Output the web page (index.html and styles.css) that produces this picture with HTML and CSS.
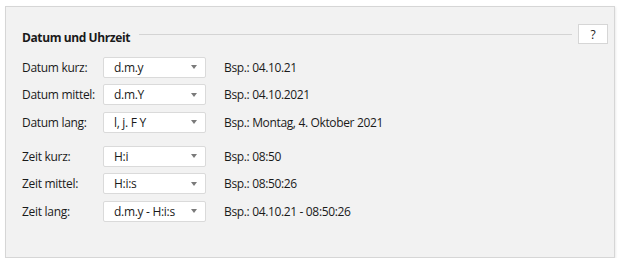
FILE: index.html
```html
<!DOCTYPE html>
<html lang="de">
<head>
<meta charset="utf-8">
<link rel="stylesheet" href="styles.css">
</head>
<body>
<div class="panel">
  <div class="header">
    <span class="title">Datum und Uhrzeit</span>
    <span class="rule"></span>
    <button class="help">?</button>
  </div>
  <div class="group">
    <div class="row"><span class="label">Datum kurz:</span><div class="select"><span>d.m.y</span><i class="arrow"></i></div><span class="example">Bsp.: 04.10.21</span></div>
    <div class="row"><span class="label">Datum mittel:</span><div class="select"><span>d.m.Y</span><i class="arrow"></i></div><span class="example">Bsp.: 04.10.2021</span></div>
    <div class="row"><span class="label">Datum lang:</span><div class="select"><span>l, j. F Y</span><i class="arrow"></i></div><span class="example">Bsp.: Montag, 4. Oktober 2021</span></div>
  </div>
  <div class="group">
    <div class="row"><span class="label">Zeit kurz:</span><div class="select"><span>H:i</span><i class="arrow"></i></div><span class="example">Bsp.: 08:50</span></div>
    <div class="row"><span class="label">Zeit mittel:</span><div class="select"><span>H:i:s</span><i class="arrow"></i></div><span class="example">Bsp.: 08:50:26</span></div>
    <div class="row"><span class="label">Zeit lang:</span><div class="select"><span>d.m.y - H:i:s</span><i class="arrow"></i></div><span class="example">Bsp.: 04.10.21 - 08:50:26</span></div>
  </div>
</div>
</body>
</html>
```
FILE: styles.css
```css
html, body {
  margin: 0;
  padding: 0;
  background: #ffffff;
}
body {
  font-family: "Open Sans", "Noto Sans", sans-serif;
  font-size: 12px;
  color: #1a1a1a;
}
.panel {
  box-sizing: border-box;
  margin: 6px 0 0 5px;
  width: 610px;
  height: 252px;
  background: #f2f2f2;
  border: 1px solid #d6d6d6;
  box-shadow: 1px 1px 2px rgba(0,0,0,0.08);
  padding: 17px 6px 0 16px;
}
.header {
  display: flex;
  align-items: center;
  height: 20px;
}
.title {
  font-weight: 700;
  font-size: 12px;
  letter-spacing: -0.4px;
  position: relative;
  top: 3px;
}
.rule {
  flex: 1;
  height: 1px;
  background: #d4d4d4;
  margin: 0 6px 0 9px;
}
.help {
  box-sizing: border-box;
  width: 30px;
  height: 20px;
  background: #fff;
  border: 1px solid #d6d6d6;
  font: inherit;
  font-size: 12px;
  color: #222;
  padding: 0;
}
.group {
  display: flex;
  flex-direction: column;
  gap: 6.5px;
  margin-top: 12.5px;
}
.group + .group {
  margin-top: 13px;
}
.row {
  display: flex;
  align-items: center;
  height: 21px;
}
.label {
  width: 81px;
  letter-spacing: -0.3px;
}
.select {
  box-sizing: border-box;
  width: 103px;
  height: 21px;
  background: #fff;
  border: 1px solid #dadada;
  border-radius: 2px;
  display: flex;
  align-items: center;
  justify-content: space-between;
  padding: 0 8px 0 10px;
  letter-spacing: -0.3px;
}
.arrow {
  width: 0;
  height: 0;
  border-left: 3.5px solid transparent;
  border-right: 3.5px solid transparent;
  border-top: 4px solid #7a7a7a;
}
.example {
  margin-left: 18px;
  letter-spacing: -0.35px;
}
```
